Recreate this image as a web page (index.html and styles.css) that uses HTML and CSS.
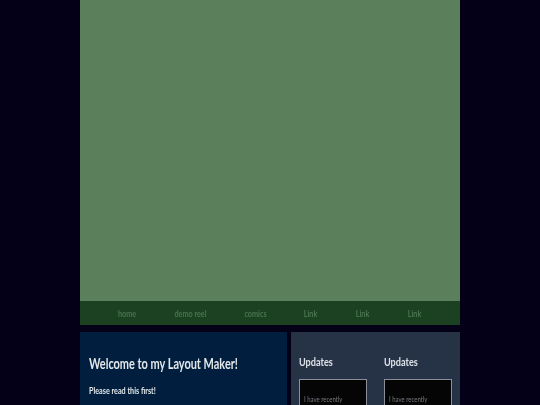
FILE: index.html
```html
<!DOCTYPE html>
<html lang="en">
<head>
    <meta charset="UTF-8">
    <meta name="viewport" content="width=device-width, initial-scale=1.0">
    <title>Layout Maker</title>
    <link rel="stylesheet" href="styles.css">
</head>
<body>
    <div class="page">
        <div class="banner"></div>
        <nav class="nav">
            <a class="nav-home" href="#">home</a>
            <a class="nav-reel" href="#">demo reel</a>
            <a class="nav-comics" href="#">comics</a>
            <a class="nav-link" href="#">Link</a>
            <a class="nav-link" href="#">Link</a>
            <a class="nav-link" href="#">Link</a>
        </nav>
        <div class="content">
            <section class="welcome">
                <h1>Welcome to my Layout Maker!</h1>
                <p>Please read this first!</p>
            </section>
            <aside class="updates">
                <div class="update-col">
                    <h2>Updates</h2>
                    <div class="update-box"><span>I have recently</span></div>
                </div>
                <div class="update-col">
                    <h2>Updates</h2>
                    <div class="update-box"><span>I have recently</span></div>
                </div>
            </aside>
        </div>
    </div>
</body>
</html>
```

FILE: styles.css
```css
html, body {
    height: 100%;
    overflow: hidden;
}

body {
    margin: 0;
    background-color: #030018;
    font-family: "Lato", "Noto Sans", sans-serif;
}

.page {
    width: 380px;
    margin: 0 auto;
}

.banner {
    height: 301px;
    background-color: #5b7f5b;
}

.nav {
    display: flex;
    justify-content: space-between;
    height: 24px;
    padding: 0 39px 0 38px;
    background-color: #1c4122;
    font-size: 9.5px;
    font-weight: 700;
    line-height: 26px;
}

.nav a {
    display: flex;
    justify-content: center;
    color: #4b7350;
    text-decoration: none;
    white-space: nowrap;
    transform: scaleX(.76);
    filter: blur(.3px);
}

.nav-home { width: 18px; }
.nav-reel { width: 31px; }
.nav-comics { width: 21px; }
.nav-link { width: 13px; }

.content {
    display: flex;
    gap: 4px;
    margin-top: 7px;
}

.welcome {
    width: 207px;
    height: 200px;
    box-sizing: border-box;
    padding: 23px 9px;
    background-color: #021e3f;
    color: #e2e8ea;
}

.welcome h1 {
    margin: 0;
    font-size: 14.5px;
    line-height: 18px;
    font-weight: 700;
    white-space: nowrap;
    transform: scaleX(.755);
    transform-origin: left;
    filter: blur(.3px);
}

.welcome p {
    margin: 12px 0 0;
    font-size: 9px;
    line-height: 12px;
    font-weight: 700;
    white-space: nowrap;
    transform: scaleX(.8);
    transform-origin: left;
    filter: blur(.3px);
}

.updates {
    flex: 1;
    display: flex;
    gap: 17px;
    height: 200px;
    box-sizing: border-box;
    padding: 23px 8px;
    background-color: #263246;
}

.update-col {
    width: 68px;
}

.update-col h2 {
    margin: 0;
    color: #dde2e8;
    font-size: 12px;
    line-height: 14px;
    font-weight: 700;
    transform: scaleX(.76);
    transform-origin: left;
    filter: blur(.3px);
}

.update-box {
    box-sizing: border-box;
    height: 120px;
    margin-top: 10px;
    padding: 14px 4px;
    border: 1px solid #8a8f99;
    background-color: #050505;
    color: #787b82;
    font-size: 7.5px;
    line-height: 12px;
}

.update-box span {
    display: block;
    white-space: nowrap;
    transform: scaleX(.8);
    transform-origin: left;
    filter: blur(.3px);
}
```
